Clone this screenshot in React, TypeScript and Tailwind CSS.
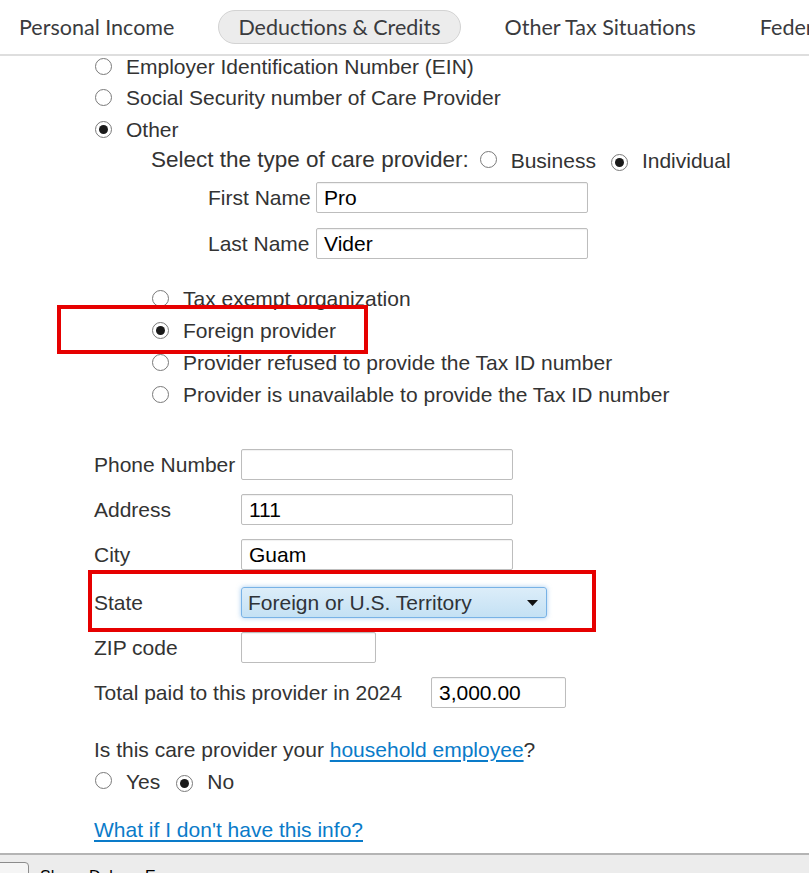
import React from "react";

const font = { fontFamily: '"Liberation Sans", Arial, sans-serif' };

function Radio({ checked = false }: { checked?: boolean }) {
  return (
    <span className="inline-flex w-[17px] h-[17px] shrink-0 items-center justify-center rounded-full border border-[#7a7a7a] bg-white">
      {checked && <span className="block w-[9px] h-[9px] rounded-full bg-[#1a1a1a]" />}
    </span>
  );
}

function RadioRow({ checked, label, className = "" }: { checked?: boolean; label: string; className?: string }) {
  return (
    <div className={`flex items-center h-[22px] ${className}`}>
      <Radio checked={checked} />
      <span className="ml-[14px] whitespace-nowrap">{label}</span>
    </div>
  );
}

function TextInput({ value = "", className = "" }: { value?: string; className?: string }) {
  return (
    <div className={`h-[31px] border border-[#bdbdbd] rounded-[2px] bg-white flex items-center pl-[7px] text-black shadow-[inset_0_1px_1px_rgba(0,0,0,0.06)] ${className}`}>
      {value}
    </div>
  );
}

function FieldRow({ label, children, className = "" }: { label: string; children: React.ReactNode; className?: string }) {
  return (
    <div className={`flex items-center ${className}`}>
      <span className="w-[147px] whitespace-nowrap">{label}</span>
      {children}
    </div>
  );
}

export default function App() {
  return (
    <div className="relative w-[809px] h-[873px] overflow-hidden bg-white text-[#333333]" style={font}>
      {/* Header tabs */}
      <div
        className="h-[56px] border-b-2 border-[#dedede] flex items-center gap-[24px] -ml-[1px] whitespace-nowrap overflow-hidden text-[21.5px] text-[#3a3b3e] pb-[0px]"
        style={{ fontFamily: 'Lato, "Open Sans", sans-serif' }}
      >
        <div className="px-[20px] h-[34px] flex items-center">Personal Income</div>
        <div className="px-[19px] h-[34px] flex items-center rounded-full bg-[#ececec] border border-[#d3d3d3]">Deductions &amp; Credits</div>
        <div className="px-[20px] h-[34px] flex items-center">Other Tax Situations</div>
        <div className="px-[20px] h-[34px] flex items-center">Federal Review</div>
      </div>

      <div className="text-[21px] leading-none -mt-[1px]">
        <div className="pl-[95px]">
          <RadioRow label="Employer Identification Number (EIN)" className="mt-[0px]" />
          <RadioRow label="Social Security number of Care Provider" className="mt-[9px]" />
          <RadioRow checked label="Other" className="mt-[10px]" />
        </div>

        <div className="pl-[151px] flex items-center h-[22px] mt-[9px] whitespace-nowrap">
          <span className="text-[22.5px]">Select the type of care provider:</span>
          <span className="ml-[11px]"><Radio /></span>
          <span className="ml-[14px]">Business</span>
          <span className="ml-[15px]"><Radio checked /></span>
          <span className="ml-[14px]">Individual</span>
        </div>

        <div className="pl-[208px] flex items-center mt-[11px]">
          <span className="w-[108px] whitespace-nowrap">First Name</span>
          <TextInput value="Pro" className="w-[272px]" />
        </div>
        <div className="pl-[208px] flex items-center mt-[15px]">
          <span className="w-[108px] whitespace-nowrap">Last Name</span>
          <TextInput value="Vider" className="w-[272px]" />
        </div>

        <div className="pl-[152px]">
          <RadioRow label="Tax exempt organization" className="mt-[28px]" />
          <RadioRow checked label="Foreign provider" className="mt-[10px]" />
          <RadioRow label="Provider refused to provide the Tax ID number" className="mt-[10px]" />
          <RadioRow label="Provider is unavailable to provide the Tax ID number" className="mt-[10px]" />
        </div>

        <div className="pl-[94px]">
          <FieldRow label="Phone Number" className="mt-[44px]">
            <TextInput className="w-[272px]" />
          </FieldRow>
          <FieldRow label="Address" className="mt-[14px]">
            <TextInput value="111" className="w-[272px]" />
          </FieldRow>
          <FieldRow label="City" className="mt-[14px]">
            <TextInput value="Guam" className="w-[272px]" />
          </FieldRow>
          <FieldRow label="State" className="mt-[17px]">
            <div className="w-[306px] h-[31px] rounded-[3px] border border-[#78b2e6] bg-gradient-to-b from-[#dcedf9] to-[#c4e1f4] shadow-[0_0_5px_rgba(90,160,225,0.55)] flex items-center justify-between pl-[6px] pr-[8px] text-[#2f3338]">
              <span>Foreign or U.S. Territory</span>
              <svg width="11" height="6" viewBox="0 0 11 6"><path d="M0 0 L11 0 L5.5 6 Z" fill="#111" /></svg>
            </div>
          </FieldRow>
          <FieldRow label="ZIP code" className="mt-[14px]">
            <TextInput className="w-[135px]" />
          </FieldRow>
          <div className="flex items-center mt-[14px]">
            <span className="w-[337px] whitespace-nowrap">Total paid to this provider in 2024</span>
            <TextInput value="3,000.00" className="w-[135px]" />
          </div>

          <div className="flex items-center h-[22px] mt-[30px] whitespace-nowrap">
            Is this care provider your&nbsp;
            <a className="text-[#0a7bc9] underline underline-offset-[3px]" href="#">household employee</a>?
          </div>
          <div className="flex items-center h-[22px] mt-[10px]">
            <span className="ml-[1px]"><Radio /></span>
            <span className="ml-[14px]">Yes</span>
            <span className="ml-[16px]"><Radio checked /></span>
            <span className="ml-[14px]">No</span>
          </div>
          <div className="flex items-center h-[22px] mt-[26px]">
            <a className="text-[#0a7bc9] underline underline-offset-[3px] whitespace-nowrap" href="#">What if I don't have this info?</a>
          </div>
        </div>

        {/* bottom bar */}
        <div className="mt-[13px] border-t-2 border-[#b4b4b4] bg-[#ececec] h-[40px] flex items-start overflow-hidden">
          <div className="mt-[7px] -ml-[6px] w-[35px] h-[24px] rounded-[4px] border border-[#8c8c8c] bg-[#f5f5f5]" />
          <span className="ml-[11px] mt-[14px] text-[16px] text-black whitespace-nowrap">Show&nbsp;&nbsp;Debug&nbsp;&nbsp;Errors</span>
        </div>
      </div>

      {/* red highlight boxes */}
      <div className="absolute left-[57px] top-[305px] w-[311px] h-[49px] border-[4px] border-[#e60000] pointer-events-none" />
      <div className="absolute left-[88px] top-[570px] w-[508px] h-[62px] border-[4px] border-[#e60000] pointer-events-none" />
    </div>
  );
}
